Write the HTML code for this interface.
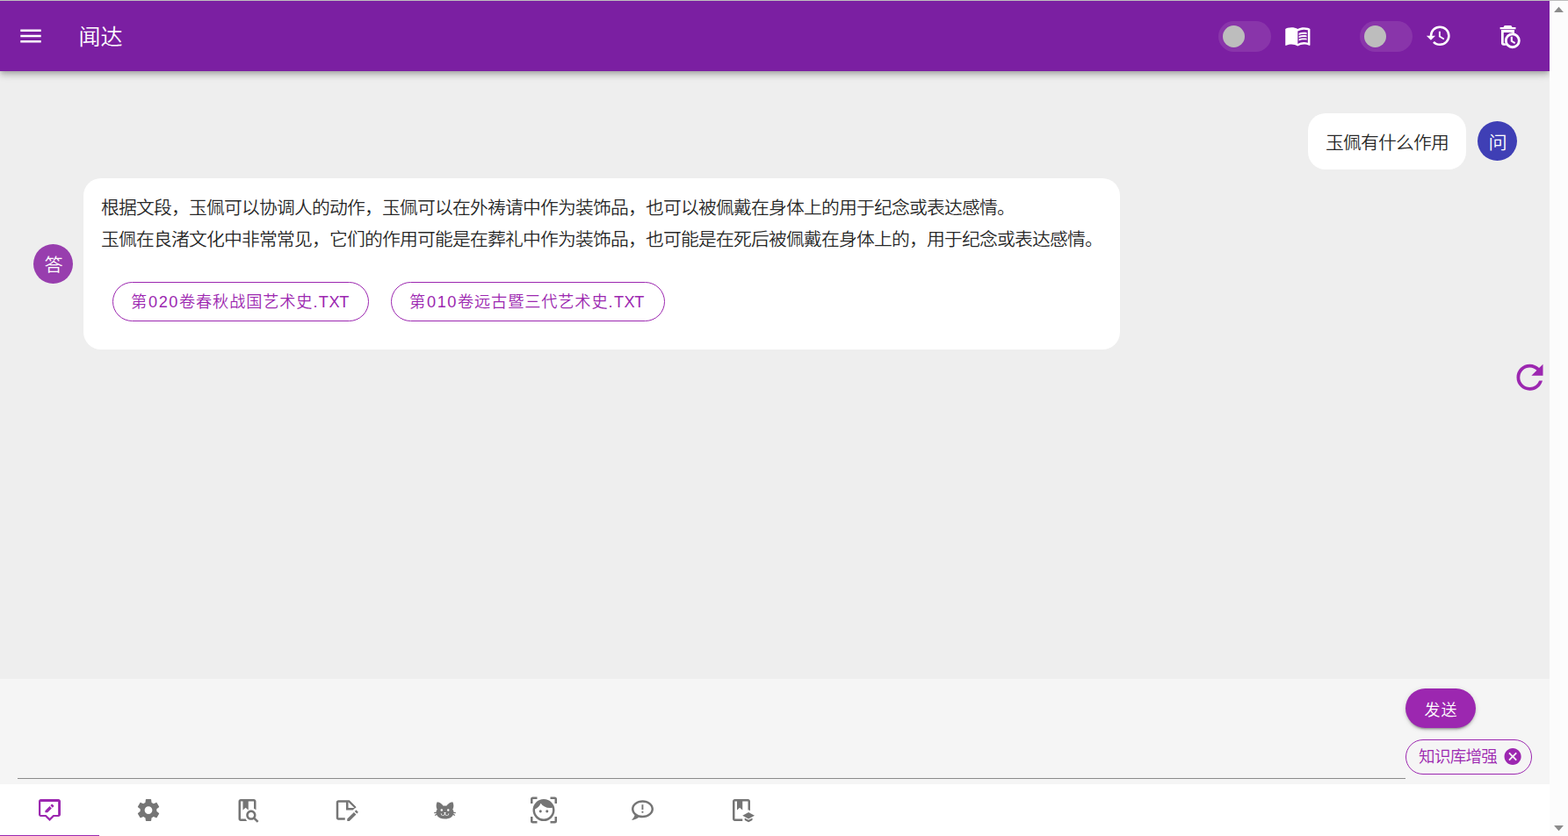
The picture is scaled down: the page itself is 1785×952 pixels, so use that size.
<!DOCTYPE html>
<html lang="zh-CN">
<head>
<meta charset="utf-8">
<title>闻达</title>
<style>
*{box-sizing:border-box;margin:0;padding:0}
html,body{width:1785px;height:952px;overflow:hidden;background:#eeeeee;
  font-family:"Liberation Sans","Noto Sans CJK SC",sans-serif;color:rgba(0,0,0,.87);font-weight:350}
body{position:relative}
.abs{position:absolute}
#topline{left:0;top:0;width:1764px;height:1px;background:#bebebe}
#topline2{left:1764px;top:0;width:21px;height:1px;background:#bcbcbc}
#scroll{left:1764px;top:1px;width:21px;height:951px;background:#fcfcfc}
#header{left:0;top:1px;width:1764px;height:80px;background:#7b1fa2;
  box-shadow:0 2.5px 5px -1.25px rgba(0,0,0,.2),0 5px 6.25px 0 rgba(0,0,0,.14),0 1.25px 12.5px 0 rgba(0,0,0,.12)}
#title{font-weight:inherit;left:89.5px;top:22px;height:40px;line-height:40px;font-size:25px;color:#fff;white-space:nowrap}
.track{width:60px;height:35px;border-radius:17.5px;background:#8935aa;top:24px}
.thumb{width:25px;height:25px;border-radius:50%;background:#bdbdbd;top:29px}
svg{position:absolute;display:block;overflow:visible}
.bubble{background:#fff;border-radius:20px;font-size:20px;white-space:nowrap}
.avatar{width:45px;height:45px;border-radius:50%;color:#fff;font-size:20px;text-align:center;line-height:45px;padding-top:2.5px}
.obtn{height:45px;border:1px solid #9c27b0;border-radius:22.5px;color:#9c27b0;font-size:18.2px;
  letter-spacing:.8625px;line-height:43px;padding:1px 0 0 20px;white-space:nowrap}
.dg{letter-spacing:1.57px;margin-left:.9px}.dot{letter-spacing:1.37px}.t1{letter-spacing:.53px}.t2{letter-spacing:-.41px}
.sx{display:inline-block;transform:scaleX(1.06)}
#inputarea{left:0;top:773px;width:1764px;height:120px;background:#f5f5f5}
#uline{left:20px;top:886px;width:1580px;height:1px;background:#8a8a8a}
#send{left:1600px;top:784px;width:80px;height:45px;border-radius:22.5px;background:#9c27b0;color:#fff;
  font-size:18px;letter-spacing:1.0625px;line-height:45px;text-align:center;padding:3px 0 0 1px;
  box-shadow:0 3.75px 1.25px -2.5px rgba(0,0,0,.2),0 2.5px 2.5px 0 rgba(0,0,0,.14),0 1.25px 6.25px 0 rgba(0,0,0,.12)}
#kchip{left:1600px;top:842px;width:144px;height:40px;border:1px solid #9c27b0;border-radius:20px;color:#9c27b0;
  font-size:18.6px;line-height:38px;padding-left:14.1px;white-space:nowrap;letter-spacing:-.79px}
#tabs{left:0;top:893px;width:1764px;height:59px;background:#fff}
#slider{left:0;top:951px;width:113px;height:1px;background:#9c27b0}
</style>
</head>
<body>
<header id="header" class="abs"></header>
<div id="topline" class="abs"></div>
<div id="topline2" class="abs"></div>
<div id="scroll" class="abs"></div>

<h1 id="title" class="abs">闻达</h1>
<div class="abs track" style="left:1387px"></div>
<div class="abs thumb" style="left:1392px"></div>
<div class="abs track" style="left:1548px"></div>
<div class="abs thumb" style="left:1553px"></div>

<div class="abs bubble" style="left:1489px;top:129px;width:180px;height:64px;line-height:64px;padding:2px 0 0 19.6px"><span style="display:inline-block;letter-spacing:-.7692px;transform:scaleX(1.04);transform-origin:0 0">玉佩有什么作用</span></div>
<div class="abs avatar" style="left:1682px;top:138px;background:#3f3fb5"><span class="sx">问</span></div>

<div class="abs avatar" style="left:38px;top:278px;background:#983eae;padding-top:1.5px"><span class="sx">答</span></div>
<div class="abs bubble" style="left:95px;top:203px;width:1180px;height:195px"></div>
<div class="abs" id="ans" style="left:114.6px;top:218.5px;font-size:20px;line-height:36px;white-space:nowrap;letter-spacing:-.7692px;transform:scaleX(1.04);transform-origin:0 0">根据文段，玉佩可以协调人的动作，玉佩可以在外祷请中作为装饰品，也可以被佩戴在身体上的用于纪念或表达感情。<br>玉佩在良渚文化中非常常见，它们的作用可能是在葬礼中作为装饰品，也可能是在死后被佩戴在身体上的，用于纪念或表达感情。</div>
<div class="abs obtn" style="left:128px;top:321px;width:292px">第<span class="dg">020</span>卷春秋战国艺术史<span class="dot">.</span><span class="t1">T</span><span class="t2">X</span>T</div>
<div class="abs obtn" style="left:445px;top:321px;width:312px">第<span class="dg">010</span>卷远古暨三代艺术史<span class="dot">.</span><span class="t1">T</span><span class="t2">X</span>T</div>

<div id="inputarea" class="abs"></div>
<div id="uline" class="abs"></div>
<div id="send" class="abs">发送</div>
<div id="kchip" class="abs">知识库增强</div>

<nav id="tabs" class="abs"></nav>
<div id="slider" class="abs"></div>
<svg id="icons" width="1785" height="952" viewBox="0 0 1785 952" style="left:0;top:0">
<path transform="translate(19.4 26) scale(1.3 1.25)" fill="#fff" d="M3,6H21V8H3V6M3,11H21V13H3V11M3,16H21V18H3V16Z"/>
<path transform="translate(1461.97 25.5) scale(1.28 1.25)" fill="#fff" d="M12 21.5C10.65 20.65 8.2 20 6.5 20C4.85 20 3.15 20.3 1.75 21.05C1.65 21.1 1.6 21.1 1.5 21.1C1.25 21.1 1 20.85 1 20.6V6C1.6 5.55 2.25 5.25 3 5C4.11 4.65 5.33 4.5 6.5 4.5C8.45 4.5 10.55 4.9 12 6C13.45 4.9 15.55 4.5 17.5 4.5C18.67 4.5 19.89 4.65 21 5C21.75 5.25 22.4 5.55 23 6V20.6C23 20.85 22.75 21.1 22.5 21.1C22.4 21.1 22.35 21.1 22.25 21.05C20.85 20.3 19.15 20 17.5 20C15.8 20 13.35 20.65 12 21.5M12 8V19.5C13.35 18.65 15.8 18 17.5 18C18.7 18 19.9 18.15 21 18.5V7C19.9 6.65 18.7 6.5 17.5 6.5C15.8 6.5 13.35 7.15 12 8M13 11.5C14.11 10.82 15.6 10.5 17.5 10.5C18.41 10.5 19.26 10.59 20 10.78V9.23C19.13 9.08 18.29 9 17.5 9C15.73 9 14.23 9.28 13 9.84V11.5M17.5 11.67C15.79 11.67 14.29 11.93 13 12.46V14.15C14.11 13.5 15.6 13.16 17.5 13.16C18.54 13.16 19.38 13.24 20 13.4V11.9C19.13 11.74 18.29 11.67 17.5 11.67M20 14.57C19.13 14.41 18.29 14.33 17.5 14.33C15.67 14.33 14.17 14.6 13 15.13V16.82C14.11 16.16 15.6 15.83 17.5 15.83C18.54 15.83 19.38 15.91 20 16.07V14.57Z"/>
<path transform="translate(1622.6 25.75) scale(1.275 1.25)" fill="#fff" d="M13.5,8H12V13L16.28,15.54L17,14.33L13.5,12.25V8M13,3A9,9 0 0,0 4,12H1L4.96,16.03L9,12H6A7,7 0 0,1 13,5A7,7 0 0,1 20,12A7,7 0 0,1 13,19C11.07,19 9.32,18.21 8.06,16.94L6.64,18.36C8.27,20 10.5,21 13,21A9,9 0 0,0 22,12A9,9 0 0,0 13,3"/>
<path transform="translate(1719 407.2) scale(1.875)" fill="#9c27b0" d="M17.65,6.35C16.2,4.9 14.21,4 12,4A8,8 0 0,0 4,12A8,8 0 0,0 12,20C15.73,20 18.84,17.45 19.73,14H17.65C16.83,16.33 14.61,18 12,18A6,6 0 0,1 6,12A6,6 0 0,1 12,6C13.66,6 15.14,6.69 16.22,7.78L13,11H20V4L17.65,6.35Z"/>
<path transform="translate(1710.64 850.04) scale(0.955)" fill="#9c27b0" d="M12,2C17.53,2 22,6.47 22,12C22,17.53 17.53,22 12,22C6.47,22 2,17.53 2,12C2,6.47 6.47,2 12,2M15.59,7L12,10.59L8.41,7L7,8.41L10.59,12L7,15.59L8.41,17L12,13.41L15.59,17L17,15.59L13.41,12L17,8.41L15.59,7Z"/>
<path transform="translate(41.5 907.6) scale(1.25)" fill="#9c27b0" d="M4 2H20C21.1 2 22 2.9 22 4V16C22 17.1 21.1 18 20 18H16L12 22L8 18H4C2.9 18 2 17.1 2 16V4C2 2.9 2.9 2 4 2M3.8 4.3V16.3H8.83L12 19.4L15.17 16.3H19.7V4.3H3.8ZM7.9 14.1V12.5L12 8.4L13.9 10.3L10.1 14.1ZM12.7 7.7L13.8 6.6C14 6.4 14.3 6.4 14.5 6.6L15.8 7.9C16 8.1 16 8.4 15.8 8.6L14.6 9.7Z"/>
<path transform="translate(154.0 907.6) scale(1.25)" fill="#757575" d="M12,15.5A3.5,3.5 0 0,1 8.5,12A3.5,3.5 0 0,1 12,8.5A3.5,3.5 0 0,1 15.5,12A3.5,3.5 0 0,1 12,15.5M19.43,12.97C19.47,12.65 19.5,12.33 19.5,12C19.5,11.67 19.47,11.34 19.43,11L21.54,9.37C21.73,9.22 21.78,8.95 21.66,8.73L19.66,5.27C19.54,5.05 19.27,4.96 19.05,5.05L16.56,6.05C16.04,5.66 15.5,5.32 14.87,5.07L14.5,2.42C14.46,2.18 14.25,2 14,2H10C9.75,2 9.54,2.18 9.5,2.42L9.13,5.07C8.5,5.32 7.96,5.66 7.44,6.05L4.95,5.05C4.73,4.96 4.46,5.05 4.34,5.27L2.34,8.73C2.21,8.95 2.27,9.22 2.46,9.37L4.57,11C4.53,11.34 4.5,11.67 4.5,12C4.5,12.33 4.53,12.65 4.57,12.97L2.46,14.63C2.27,14.78 2.21,15.05 2.34,15.27L4.34,18.73C4.46,18.95 4.73,19.03 4.95,18.95L7.44,17.94C7.96,18.34 8.5,18.68 9.13,18.93L9.5,21.58C9.54,21.82 9.75,22 10,22H14C14.25,22 14.46,21.82 14.5,21.58L14.87,18.93C15.5,18.67 16.04,18.34 16.56,17.94L19.05,18.95C19.27,19.03 19.54,18.95 19.66,18.73L21.66,15.27C21.78,15.05 21.73,14.78 21.54,14.63L19.43,12.97Z"/>
<path transform="translate(266.5 907.6) scale(1.25)" fill="#757575" d="M19.31 18.9L22.39 22L21 23.39L17.88 20.32C17.19 20.75 16.37 21 15.5 21C13 21 11 19 11 16.5C11 14 13 12 15.5 12C18 12 20 14 20 16.5C20 17.38 19.75 18.21 19.31 18.9M15.5 19C16.88 19 18 17.88 18 16.5C18 15.12 16.88 14 15.5 14C14.12 14 13 15.12 13 16.5C13 17.88 14.12 19 15.5 19M18 4V10.5C18.7 10.8 19.4 11.2 20 11.8V4C20 2.9 19.1 2 18 2H6C4.9 2 4 2.9 4 4V20C4 21.1 4.9 22 6 22H11.8C11.2 21.4 10.8 20.7 10.5 20H6V4H8V12L10.5 9.75L13 12V4H18Z"/>
<path transform="translate(379.0 907.6) scale(1.25)" fill="#757575" d="M18.13 12L19.39 10.74C19.83 10.3 20.39 10.06 21 10V9L15 3H5C3.89 3 3 3.89 3 5V19C3 20.1 3.89 21 5 21H11V19.13L11.13 19H5V5H12V12H18.13M14 4.5L19.5 10H14V4.5M19.13 13.83L21.17 15.87L15.04 22H13V19.96L19.13 13.83M22.85 14.19L21.87 15.17L19.83 13.13L20.81 12.15C21 11.95 21.33 11.95 21.53 12.15L22.85 13.47C23.05 13.67 23.05 14 22.85 14.19Z"/>
<path transform="translate(491.5 907.6) scale(1.25)" fill="#757575" d="M12,8L10.67,8.09C9.81,7.07 7.4,4.5 5,4.5C5,4.5 3.03,7.46 4.96,11.41C4.41,12.24 4.07,12.67 4,13.66L2.07,13.95L2.28,14.93L4.04,14.67L4.18,15.38L2.61,16.32L3.08,17.21L4.53,16.32C5.68,18.76 8.59,20 12,20C15.41,20 18.32,18.76 19.47,16.32L20.92,17.21L21.39,16.32L19.82,15.38L19.96,14.67L21.72,14.93L21.93,13.95L20,13.66C19.93,12.67 19.59,12.24 19.04,11.41C20.97,7.46 19,4.5 19,4.5C16.6,4.5 14.19,7.07 13.33,8.09L12,8M9,11A1,1 0 0,1 10,12A1,1 0 0,1 9,13A1,1 0 0,1 8,12A1,1 0 0,1 9,11M15,11A1,1 0 0,1 16,12A1,1 0 0,1 15,13A1,1 0 0,1 14,12A1,1 0 0,1 15,11M11,14H13L12.3,15.39C12.5,16.03 13.06,16.5 13.75,16.5A1.5,1.5 0 0,0 15.25,15H15.75A2,2 0 0,1 13.75,17C13,17 12.35,16.59 12,16V16H12C11.65,16.59 11,17 10.25,17A2,2 0 0,1 8.25,15H8.75A1.5,1.5 0 0,0 10.25,16.5C10.94,16.5 11.5,16.03 11.7,15.39L11,14Z"/>
<path transform="translate(604.0 907.6) scale(1.25)" fill="#757575" d="M9,11.75A1.25,1.25 0 0,0 7.75,13A1.25,1.25 0 0,0 9,14.25A1.25,1.25 0 0,0 10.25,13A1.25,1.25 0 0,0 9,11.75M15,11.75A1.25,1.25 0 0,0 13.75,13A1.25,1.25 0 0,0 15,14.25A1.25,1.25 0 0,0 16.25,13A1.25,1.25 0 0,0 15,11.75M12,2A10,10 0 0,0 2,12A10,10 0 0,0 12,22A10,10 0 0,0 22,12A10,10 0 0,0 12,2M12,20C7.59,20 4,16.41 4,12C4,11.71 4,11.42 4.05,11.14C6.41,10.09 8.28,8.16 9.26,5.77C11.07,8.33 14.05,10 17.42,10C18.2,10 18.95,9.91 19.67,9.74C19.88,10.45 20,11.21 20,12C20,16.41 16.41,20 12,20M0,2A2,2 0 0,1 2,0H6V2H2V6H0V2M24,22A2,2 0 0,1 22,24H18V22H22V18H24V22M2,24A2,2 0 0,1 0,22V18H2V22H6V24H2M22,0A2,2 0 0,1 24,2V6H22V2H18V0H22Z"/>
<path transform="translate(716.5 907.6) scale(1.25)" fill="#757575" d="M12 3C17.5 3 22 6.58 22 11C22 15.42 17.5 19 12 19C10.76 19 9.57 18.82 8.47 18.5C5.55 21 2 21 2 21C4.33 18.67 4.7 17.1 4.75 16.5C3.05 15.07 2 13.13 2 11C2 6.58 6.5 3 12 3M12 5C7.58 5 4 7.69 4 11C4 14.31 7.58 17 12 17C16.42 17 20 14.31 20 11C20 7.69 16.42 5 12 5M11.2 7H12.7V11.5H11.2V7M11.2 13H12.7V14.6H11.2V13Z"/>
<path transform="translate(829.0 907.6) scale(1.25)" fill="#757575" d="M18 4H13V12L10.5 9.75L8 12V4H6V20H13V22H6C4.9 22 4 21.1 4 20V4C4 2.9 4.9 2 6 2H18C19.1 2 20 2.9 20 4V12.5L18.5 11.7L18 12V4M18.5 14L13 17L18.5 20L24 17L18.5 14M15 19.1V21.1L18.5 23L22 21.1V19.1L18.5 21L15 19.1Z"/>
<g transform="translate(1701.5 26) scale(1.25)" fill="#fff">
<path d="M9 2.4H15L16 3.9H19.2V5.7H4.9V3.9H8Z"/>
<path fill-rule="evenodd" d="M6 6.4H18V20.6H8C6.9 20.6 6 19.7 6 18.6ZM8.2 8.8V18.5H16V8.8Z"/>
<circle cx="16.25" cy="16.2" r="7.1" fill="#7b1fa2"/>
<path fill-rule="evenodd" d="M16.25 9.05A7.15 7.15 0 1 1 16.25 23.35A7.15 7.15 0 1 1 16.25 9.05ZM16.25 11.35A4.85 4.85 0 1 0 16.25 21.05A4.85 4.85 0 1 0 16.25 11.35Z"/>
<path d="M16.3 12.5H14.6V17L18.1 19.1L18.95 17.75L16.3 16.15Z"/>
</g>
<path fill="#8b8b8b" d="M1774.5 7.8L1779.9 14H1769.1ZM1774.5 946.2L1779.9 940H1769.1Z"/>
</svg>
</body>
</html>
